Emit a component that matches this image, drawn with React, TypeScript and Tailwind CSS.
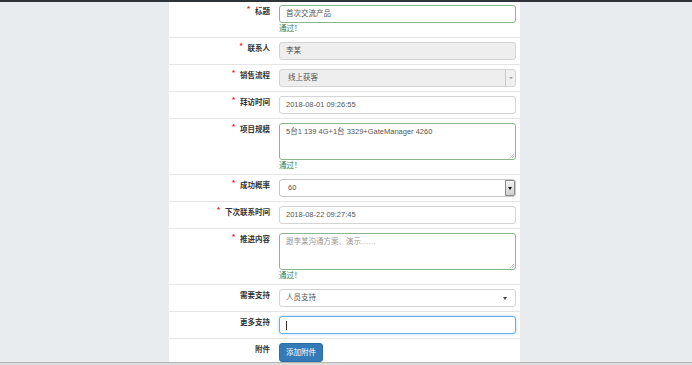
import type { ReactNode } from 'react';

const font = { fontFamily: '"Liberation Sans", "Noto Sans CJK SC", sans-serif' };

function Row({ label, req, children, first }: { label: string; req?: boolean; children: ReactNode; first?: boolean }) {
  return (
    <div className={`flex border-b border-[#e5e5e5] ${first ? 'pt-[3px]' : 'pt-[4px]'} pb-[4px]`}>
      <div className="w-[106px] shrink-0 pr-[5px] pt-[2px] text-right text-[7.5px] font-bold leading-[9px] text-[#333]">
        {req && <span className="relative -top-[3px] mr-[5px] text-[8px] text-[#e02020]">*</span>}
        {label}
      </div>
      <div className="flex-1 pl-[4px] pr-[4px]">{children}</div>
    </div>
  );
}

function Pass() {
  return <div className="pt-[2px] text-[7.5px] leading-[8px] text-[#3c763d]">通过！</div>;
}

function Box({ children, className = '' }: { children?: ReactNode; className?: string }) {
  return (
    <div className={`flex h-[18px] items-center rounded-[3px] border px-[6px] text-[7.5px] text-[#555] ${className}`}>
      {children}
    </div>
  );
}

function Grip() {
  return (
    <svg className="absolute bottom-[1px] right-[1px]" width="5" height="5" viewBox="0 0 5 5">
      <path d="M1 5 L5 1 M3 5 L5 3" stroke="#999" strokeWidth="0.6" />
    </svg>
  );
}

export default function App() {
  return (
    <div className="relative h-[365px] w-[692px] overflow-hidden bg-[#e9ecef]" style={font}>
      <div className="h-[2px] bg-[#2e3338]" />
      <div className="ml-[169px] w-[351px] bg-white">
        <Row label="标题" req first>
          <Box className="border-[#8db58d] bg-white">首次交流产品</Box>
          <Pass />
        </Row>
        <Row label="联系人" req>
          <Box className="border-[#d4d4d4] bg-[#eeeeee]">李某</Box>
        </Row>
        <Row label="销售流程" req>
          <Box className="justify-between border-[#d4d4d4] bg-[#eeeeee] !pr-0 pl-[8px]">
            <span>线上获客</span>
            <span className="flex h-full w-[10px] items-center justify-center rounded-r-[3px] border-l border-[#c8c8c8] bg-[#f0f0f0]">
              <span className="h-0 w-0 border-x-[2px] border-t-[2px] border-x-transparent border-t-[#999]" />
            </span>
          </Box>
        </Row>
        <Row label="拜访时间" req>
          <Box className="border-[#d4d4d4] bg-white">2018-08-01 09:26:55</Box>
        </Row>
        <Row label="项目规模" req>
          <div className="relative h-[37px] rounded-[3px] border border-[#8db58d] bg-white px-[6px] pt-[3px] text-[7.5px] leading-[10px] text-[#555]">
            5台1 139 4G+1台 3329+GateManager 4260
            <Grip />
          </div>
          <Pass />
        </Row>
        <Row label="成功概率" req>
          <Box className="justify-between border-[#c8c8c8] bg-white !pr-0 pl-[8px]">
            <span>60</span>
            <span className="flex h-full w-[10px] items-center justify-center rounded-r-[2px] border border-[#8a8a8a] bg-gradient-to-b from-[#f4f4f4] to-[#cfcfcf]">
              <span className="h-0 w-0 border-x-[2.5px] border-t-[3px] border-x-transparent border-t-[#111]" />
            </span>
          </Box>
        </Row>
        <Row label="下次联系时间" req>
          <Box className="border-[#d4d4d4] bg-white">2018-08-22 09:27:45</Box>
        </Row>
        <Row label="推进内容" req>
          <div className="relative h-[37px] rounded-[3px] border border-[#8db58d] bg-white px-[6px] pt-[3px] text-[7.5px] leading-[10px] text-[#999]">
            跟李某沟通方案、演示……
            <Grip />
          </div>
          <Pass />
        </Row>
        <Row label="需要支持">
          <Box className="justify-between border-[#d4d4d4] bg-white">
            <span>人员支持</span>
            <span className="mr-[2px] h-0 w-0 border-x-[2.5px] border-t-[3px] border-x-transparent border-t-[#444]" />
          </Box>
        </Row>
        <Row label="更多支持">
          <Box className="border-[#66afe9] bg-white shadow-[0_0_3px_rgba(102,175,233,0.6)]">
            <span className="h-[9px] w-px bg-[#333]" />
          </Box>
        </Row>
        <div className="flex pt-[4px]">
          <div className="w-[106px] shrink-0 pr-[5px] pt-[2px] text-right text-[7.5px] font-bold leading-[9px] text-[#333]">附件</div>
          <div className="flex-1 pl-[4px] pr-[4px]">
            <button className="block h-[19px] rounded-[3px] border border-[#2e6da4] bg-[#337ab7] px-[6px] text-[7.5px] leading-[17px] text-white">添加附件</button>
            <div className="mt-[1px] h-[18px] rounded-[3px] border border-[#d4d4d4] bg-white" />
          </div>
        </div>
      </div>
      <div className="absolute bottom-0 left-0 h-[3px] w-full border-t border-[#b5b5b5] bg-[#dcdcdc]" />
    </div>
  );
}
